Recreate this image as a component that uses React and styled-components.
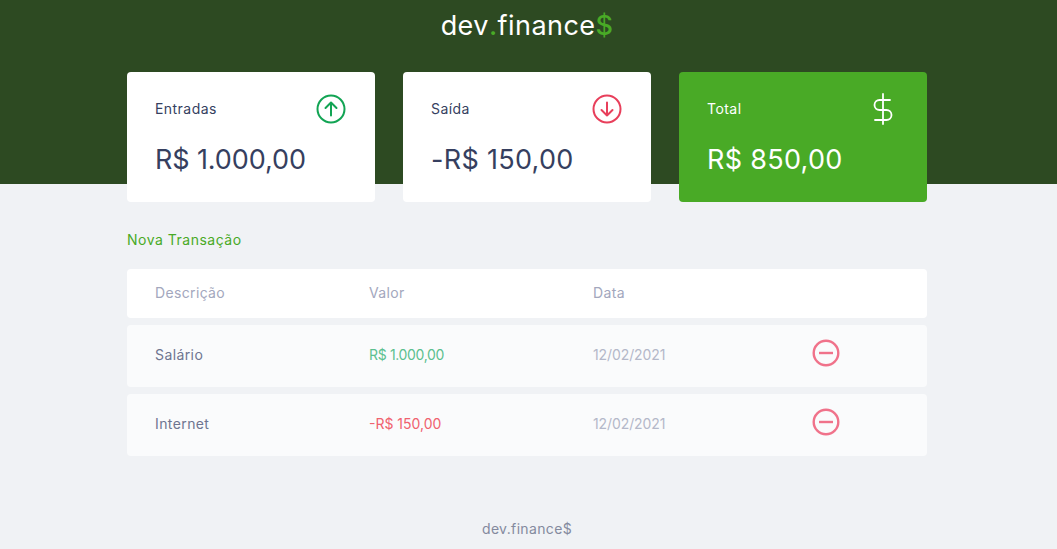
import React from 'react';
import styled, { createGlobalStyle } from 'styled-components';

const GlobalStyle = createGlobalStyle`
  * { margin: 0; padding: 0; box-sizing: border-box; }
  html, body { height: 100%; }
  body {
    background: #f0f2f5;
    font-family: "Inter", "Liberation Sans", sans-serif;
    font-size: 15px;
    overflow: hidden;
  }
`;

const Header = styled.header`
  height: 184px;
  background: #2d4a22;
  padding: 9px 3px 0 0;
  text-align: center;
`;

const Logo = styled.h1`
  font-size: 27px;
  line-height: 34px;
  font-weight: 400;
  color: #fff;
  letter-spacing: 0.45px;
`;

const LogoAccent = styled.span`
  color: #49aa26;
  font-weight: 500;
`;

const Main = styled.main`
  width: 800px;
  margin-left: 127px;
`;

const Balance = styled.section`
  display: grid;
  grid-template-columns: repeat(3, 248px);
  gap: 28px;
  margin-top: -112px;
`;

const Card = styled.div`
  height: 130px;
  padding: 22px 29px 0 28px;
  border-radius: 4px;
  background: ${(p) => (p.$total ? '#49aa26' : '#fff')};
  color: ${(p) => (p.$total ? '#fff' : '#363f5f')};
`;

const CardTop = styled.div`
  display: flex;
  align-items: center;
  justify-content: space-between;
  height: 30px;
`;

const CardLabel = styled.h3`
  margin-top: -2px;
  font-size: 14px;
  font-weight: 400;
  letter-spacing: 0.45px;
`;

const CardValue = styled.p`
  margin-top: 18px;
  font-size: 27px;
  line-height: 36px;
  font-weight: 400;
  letter-spacing: ${(p) => (p.$tight ? '-0.1px' : '0.3px')};
`;

const NewLink = styled.a`
  display: block;
  margin-top: 28px;
  height: 20px;
  font-size: 14px;
  line-height: 20px;
  letter-spacing: 0.5px;
  color: #49aa26;
`;

const Table = styled.div`
  margin-top: 19px;
  display: flex;
  flex-direction: column;
  gap: 7px;
`;

const Row = styled.div`
  display: grid;
  grid-template-columns: 214px 224px 220px 1fr;
  align-items: center;
  height: ${(p) => (p.$head ? '49px' : '62px')};
  padding: 0 0 ${(p) => (p.$head ? '2px' : '4px')} 28px;
  border-radius: 4px;
  background: ${(p) => (p.$head ? '#fff' : '#fafbfc')};
`;

const HeadCell = styled.div`
  font-size: 14px;
  letter-spacing: 0.35px;
  color: #a3a7bd;
`;

const Cell = styled.div`
  font-size: 14px;
  letter-spacing: 0.4px;
  color: #6e7590;
`;

const ValueCell = styled.div`
  font-size: 14px;
  letter-spacing: ${(p) => (p.$income ? '-0.35px' : '0')};
  color: ${(p) => (p.$income ? '#5cc08f' : '#f0626f')};
`;

const DateCell = styled.div`
  font-size: 14px;
  letter-spacing: -0.1px;
  color: #b4b8c9;
`;

const RemoveCell = styled.div`
  display: flex;
  margin: -3px 0 0 -1px;
`;

const Footer = styled.footer`
  margin-top: 63px;
  padding-right: 3px;
  text-align: center;
  font-size: 14px;
  line-height: 20px;
  letter-spacing: 0.35px;
  color: #848a9e;
`;

const IconArrow = ({ color, down }) => (
  <svg width="30" height="30" viewBox="0 0 30 30" fill="none" stroke={color} strokeWidth="2" strokeLinecap="round" strokeLinejoin="round">
    <circle cx="15" cy="15" r="13.5" />
    {down ? (
      <path d="M15 8.5v13M9.5 16l5.5 5.5 5.5-5.5" />
    ) : (
      <path d="M15 21.5v-13M9.5 14l5.5-5.5 5.5 5.5" />
    )}
  </svg>
);

const IconDollar = () => (
  <svg width="30" height="32" viewBox="0 0 30 32" fill="none" stroke="#fff" strokeWidth="1.8" strokeLinecap="round" strokeLinejoin="round">
    <path d="M15 1v30M22 7H11.5a5 5 0 0 0 0 10h7a5 5 0 0 1 0 10H7" />
  </svg>
);

const IconMinus = () => (
  <svg width="28" height="28" viewBox="0 0 28 28" fill="none" stroke="#f0728a" strokeWidth="2.4">
    <circle cx="14" cy="14" r="12.3" />
    <path d="M7 14h14" />
  </svg>
);

const transactions = [
  { name: 'Salário', value: 'R$ 1.000,00', income: true, date: '12/02/2021' },
  { name: 'Internet', value: '-R$ 150,00', income: false, date: '12/02/2021' },
];

export default function App() {
  return (
    <>
      <GlobalStyle />
      <Header>
        <Logo>
          dev<LogoAccent>.</LogoAccent>finance<LogoAccent>$</LogoAccent>
        </Logo>
      </Header>
      <Main>
        <Balance>
          <Card>
            <CardTop>
              <CardLabel>Entradas</CardLabel>
              <IconArrow color="#12a454" />
            </CardTop>
            <CardValue $tight>R$ 1.000,00</CardValue>
          </Card>
          <Card>
            <CardTop>
              <CardLabel>Saída</CardLabel>
              <IconArrow color="#e83f5b" down />
            </CardTop>
            <CardValue>-R$ 150,00</CardValue>
          </Card>
          <Card $total>
            <CardTop>
              <CardLabel>Total</CardLabel>
              <IconDollar />
            </CardTop>
            <CardValue>R$ 850,00</CardValue>
          </Card>
        </Balance>
        <NewLink>Nova Transação</NewLink>
        <Table>
          <Row $head>
            <HeadCell>Descrição</HeadCell>
            <HeadCell>Valor</HeadCell>
            <HeadCell>Data</HeadCell>
            <HeadCell />
          </Row>
          {transactions.map((t) => (
            <Row key={t.name}>
              <Cell>{t.name}</Cell>
              <ValueCell $income={t.income}>{t.value}</ValueCell>
              <DateCell>{t.date}</DateCell>
              <RemoveCell>
                <IconMinus />
              </RemoveCell>
            </Row>
          ))}
        </Table>
      </Main>
      <Footer>dev.finance$</Footer>
    </>
  );
}
